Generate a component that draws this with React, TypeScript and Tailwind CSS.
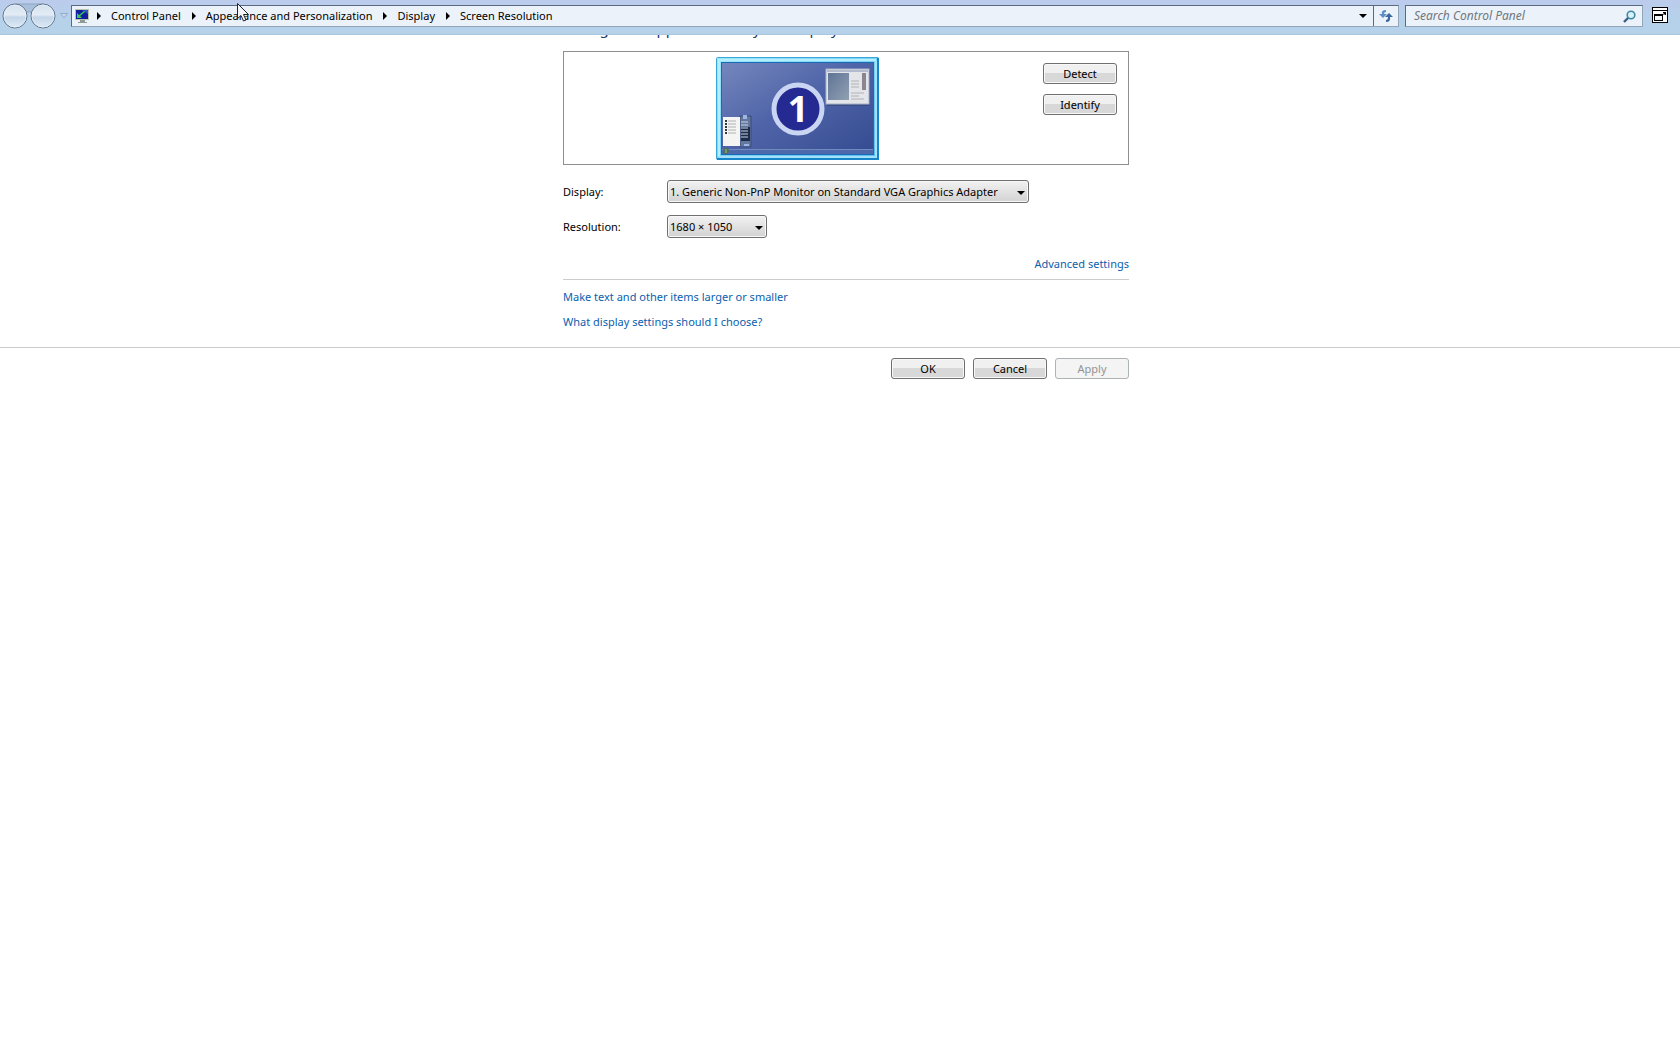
import { ReactNode, useState } from "react";
import clsx from "clsx";

const crumbs = [
  "Control Panel",
  "Appearance and Personalization",
  "Display",
  "Screen Resolution",
];

const displays = ["1. Generic Non-PnP Monitor on Standard VGA Graphics Adapter"];
const resolutions = ["1680 × 1050", "1440 × 900", "1280 × 1024", "1024 × 768"];

function NavOrbs() {
  return (
    <svg width="56" height="28" viewBox="0 0 56 28" aria-hidden="true">
      <defs>
        <linearGradient id="orb" x1="0" y1="0" x2="0" y2="1">
          <stop offset="0" stopColor="#d3e0ef" />
          <stop offset="0.45" stopColor="#e3ecf5" />
          <stop offset="0.55" stopColor="#c3d5e7" />
          <stop offset="1" stopColor="#dcebf8" />
        </linearGradient>
      </defs>
      <path d="M15 2h28v5q-14 6-28 0z" fill="#a9c0dc" stroke="#8fa6c2" />
      <circle cx="15" cy="14" r="12" fill="url(#orb)" stroke="#5f7488" />
      <circle cx="15" cy="14" r="11" fill="none" stroke="#eef4fa" strokeOpacity="0.6" />
      <circle cx="43" cy="14" r="12" fill="url(#orb)" stroke="#5f7488" />
      <circle cx="43" cy="14" r="11" fill="none" stroke="#eef4fa" strokeOpacity="0.6" />
    </svg>
  );
}

function DisplayIcon() {
  return (
    <svg width="16" height="16" viewBox="0 0 16 16" aria-hidden="true">
      <path d="M1 1h14v11H1z" fill="#b9c3ae" />
      <path d="M2 2h12v9H2z" fill="#10209a" />
      <path d="M8 2h6v4z" fill="#2d57c4" />
      <path d="M3 5v5h5l-2-2 5-4-1-1-5 4z" fill="#35c95a" />
      <path d="M6 12h5v2h2v1H4v-1h2z" fill="#8e9a94" />
    </svg>
  );
}

function CrumbArrow() {
  return (
    <svg width="4" height="8" viewBox="0 0 4 8" aria-hidden="true">
      <path d="M0 0l4 4-4 4z" fill="#000" />
    </svg>
  );
}

function DownArrow({ className }: { className?: string }) {
  return (
    <svg
      width="8"
      height="4"
      viewBox="0 0 8 4"
      className={className}
      aria-hidden="true"
    >
      <path d="M0 0h8L4 4z" fill="#000" />
    </svg>
  );
}

function RefreshIcon() {
  return (
    <svg width="14" height="14" viewBox="0 0 14 14" aria-hidden="true">
      <path d="M7 1Q2 1 3 5H0l4 4 4-4H5q0-2 2-2z" fill="#5d8fc6" />
      <path d="M7 13q5 0 4-5h3l-4-4-4 4h3q0 3-2 3z" fill="#3d689f" />
    </svg>
  );
}

function SearchIcon() {
  return (
    <svg width="13" height="13" viewBox="0 0 13 13" aria-hidden="true">
      <path d="M1 12l5-5" stroke="#3a5f86" strokeWidth="2.4" />
      <circle cx="8" cy="5" r="3.8" fill="#d9f0f6" stroke="#3f87a6" strokeWidth="1.6" />
    </svg>
  );
}

function RestoreIcon() {
  return (
    <svg width="16" height="16" viewBox="0 0 16 16" aria-hidden="true">
      <path d="M0 0h16v16H0z" fill="#000" />
      <path d="M1 1h14v2H1zM1 4h14v11H1z" fill="#fff" />
      <path d="M2 7h9v7H2z" fill="#000" />
      <path d="M3 9h7v4H3z" fill="#f2f7fc" />
      <path d="M11 5h3v3h-1V7l-1 1-1-1 1-1h-1z" fill="#000" />
    </svg>
  );
}

function Cursor() {
  return (
    <svg
      width="14"
      height="20"
      viewBox="0 0 14 20"
      className="pointer-events-none absolute top-[3px] left-[237px]"
      aria-hidden="true"
    >
      <path
        d="M.5.5v15l3.500-3 2.500 5.500 2.500-1-2.500-5.500h5z"
        fill="#f4f7fa"
        stroke="#222"
      />
    </svg>
  );
}

function MonitorPreview() {
  return (
    <svg
      width="163"
      height="103"
      viewBox="0 0 163 103"
      role="img"
      aria-label="Monitor 1"
    >
      <defs>
        <linearGradient id="desk" x1="0" y1="0" x2="1" y2="1">
          <stop offset="0" stopColor="#7587bd" />
          <stop offset="0.45" stopColor="#5065a9" />
          <stop offset="1" stopColor="#354b91" />
        </linearGradient>
        <linearGradient id="frame" x1="0" y1="0" x2="1" y2="1">
          <stop offset="0" stopColor="#9ae8fb" />
          <stop offset="1" stopColor="#57bdf0" />
        </linearGradient>
        <linearGradient id="pane" x1="0" y1="0" x2="1" y2="1">
          <stop offset="0" stopColor="#5f7596" />
          <stop offset="1" stopColor="#91a0b2" />
        </linearGradient>
      </defs>
      <rect x="0.5" y="0.5" width="162" height="102" rx="1" fill="url(#frame)" stroke="#3ba6d8" />
      <path d="M162 1v101H1" fill="none" stroke="#1485c8" strokeWidth="2" />
      <path d="M3 100V3h157" fill="none" stroke="#b5effd" strokeWidth="2" />
      <path d="M3 100h157V4" fill="none" stroke="#a5e0fa" strokeWidth="2" />
      <rect x="5.500" y="5.500" width="152" height="92" fill="url(#desk)" stroke="#186bb4" />
      <path d="M6 92h151v5H6z" fill="#6f8bc0" />
      <path d="M6 93h151v4H6z" fill="#4d69ab" />
      <circle cx="10" cy="94" r="3" fill="#47706a" />
      <path d="M10 92v4" stroke="#b7bd4c" />

      <rect x="111" y="14" width="43" height="35" fill="#3c4e88" />
      <rect x="110" y="12" width="43" height="35" fill="#e3e5e8" stroke="#a9b3c6" />
      <path d="M111 13h41v2h-41z" fill="#b2bacd" />
      <rect x="112" y="16" width="21" height="27" fill="url(#pane)" />
      <path d="M135 24h8M135 27h8M135 30h8M135 36h13M135 39h8M135 42h13" stroke="#b0b2b6" />
      <rect x="146" y="16" width="4" height="17" fill="#8c8491" />

      <path d="M24 59h11v31H24z" fill="#64789f" stroke="#384a78" />
      <path d="M25 70h9v14h-9z" fill="#1e2c4c" />
      <path d="M25 65h7M25 68h7M25 71h7M25 74h7M25 77h7M25 80h7" stroke="#c9d3e4" />
      <path d="M27 58h4v4h-4zM28 87h5v2h-5z" fill="#9db6e5" />
      <path d="M7 60h17v29H7z" fill="#f4f4f3" />
      <path d="M9 64h2M9 67h2M9 70h2M9 73h2M9 76h2" stroke="#34383d" strokeWidth="2" />
      <path d="M12 64h8M12 67h8M12 70h8M12 73h8M12 76h8" stroke="#aeb2b4" />

      <circle cx="82" cy="52" r="24" fill="#242a91" stroke="#c9d5f2" strokeWidth="5" />
      <text
        x="82"
        y="65"
        textAnchor="middle"
        fill="#fff"
        className="font-['Open_Sans',sans-serif] text-[36px] font-bold"
      >
        1
      </text>
    </svg>
  );
}

function DialogButton({
  children,
  disabled,
}: {
  children: ReactNode;
  disabled?: boolean;
}) {
  return (
    <button
      type="button"
      disabled={disabled}
      className={clsx(
        "flex h-[21px] w-[74px] items-center justify-center rounded-[3px] border",
        disabled
          ? "border-[#adb2b5] bg-[#f4f4f4] text-[#939393]"
          : "border-[#707070] bg-linear-to-b from-[#f0f0f0] from-50% to-[#d8d8d8] to-50% inset-ring inset-ring-[#f8f8f8]"
      )}
    >
      {children}
    </button>
  );
}

function SelectRow({
  id,
  label,
  options,
  width,
}: {
  id: string;
  label: string;
  options: string[];
  width: string;
}) {
  const [value, setValue] = useState(options[0]);

  return (
    <div className="flex items-center">
      <label htmlFor={id} className="w-[104px] shrink-0">
        {label}
      </label>
      <div className={clsx("relative", width)}>
        <select
          id={id}
          value={value}
          onChange={(e) => setValue(e.target.value)}
          className="block h-[23px] w-full appearance-none rounded-[3px] border border-[#707070] bg-linear-to-b from-[#f2f2f2] to-[#d2d2d2] pl-[2px] inset-ring inset-ring-[#f8f8f8]"
        >
          {options.map((option) => (
            <option key={option}>{option}</option>
          ))}
        </select>
        <DownArrow className="pointer-events-none absolute top-[11px] right-1" />
      </div>
    </div>
  );
}

function AddressBar() {
  return (
    <header className="relative flex h-[35px] items-start border-b border-[#a9c6df] bg-linear-to-b from-[#bccbec] to-[#b5d2ea] to-60% pt-[5px] pr-3">
      <div className="-mt-[3px] flex h-7 items-center">
        <NavOrbs />
        <svg width="8" height="6" viewBox="0 0 8 6" className="ml-1" aria-hidden="true">
          <path d="M.5.5h7L4 5z" fill="#c9daf0" stroke="#93a9c8" />
        </svg>
      </div>

      <div className="ml-[3px] flex h-[22px] min-w-0 flex-1 border border-t-[#5a6a80] border-r-[#92a5bb] border-b-[#92a5bb] border-l-[#5a6a80] bg-[#ebf2f9]">
        <nav className="flex flex-1 items-center pl-[2px]" aria-label="Breadcrumb">
          <DisplayIcon />
          <ol className="ml-[7px] flex items-center gap-[11px]">
            {crumbs.map((crumb) => (
              <li key={crumb} className="flex items-center gap-[10px]">
                <CrumbArrow />
                <a href="#">{crumb}</a>
              </li>
            ))}
          </ol>
        </nav>
        <button type="button" aria-label="Previous locations" className="px-[6px]">
          <DownArrow />
        </button>
        <button
          type="button"
          aria-label="Refresh"
          className="flex w-[25px] items-center justify-center border-l border-[#5a6a80]"
        >
          <RefreshIcon />
        </button>
      </div>

      <div className="ml-[6px] flex h-[22px] w-[238px] items-center border border-t-[#5a6a80] border-r-[#92a5bb] border-b-[#92a5bb] border-l-[#5a6a80] bg-[#ebf2f9] pr-[6px] pl-2">
        <input
          type="text"
          aria-label="Search Control Panel"
          placeholder="Search Control Panel"
          className="min-w-0 flex-1 text-[12px] italic outline-none placeholder:text-[#6f7780]"
        />
        <SearchIcon />
      </div>

      <button type="button" aria-label="Restore window" className="mt-[2px] ml-[9px]">
        <RestoreIcon />
      </button>
      <Cursor />
    </header>
  );
}

export default function App() {
  return (
    <div className="min-h-screen bg-white font-['Noto_Sans',sans-serif] text-[11px] leading-4 text-black">
      <AddressBar />

      <main>
        <div className="mx-auto max-w-[578px] pl-3">
          {/* heading is scrolled up under the address bar */}
          <div className="flex h-2 items-end overflow-hidden">
            <h1 className="text-[15px] leading-[30px] text-[#1b3a5e]">
              Change the appearance of your displays
            </h1>
          </div>

          <section className="mt-2 flex h-[114px] items-start justify-between border border-[#8e8f8f] pr-[11px]">
            <div className="flex flex-1 justify-center pt-[5px] pr-[13px]">
              <MonitorPreview />
            </div>
            <div className="flex flex-col gap-[10px] pt-[11px]">
              <DialogButton>Detect</DialogButton>
              <DialogButton>Identify</DialogButton>
            </div>
          </section>

          <div className="mt-[15px] flex flex-col gap-3">
            <SelectRow id="display" label="Display:" options={displays} width="w-[362px]" />
            <SelectRow
              id="resolution"
              label="Resolution:"
              options={resolutions}
              width="w-[100px]"
            />
          </div>

          <div className="mt-[18px] flex justify-end border-b border-[#ccc] pb-[7px] text-[#0a60ad]">
            <a href="#">Advanced settings</a>
          </div>

          <div className="flex flex-col items-start gap-[9px] py-[9px] text-[#0a60ad]">
            <a href="#">Make text and other items larger or smaller</a>
            <a href="#">What display settings should I choose?</a>
          </div>
        </div>
      </main>

      <footer className="mt-2 border-t border-[#ccc] pt-[10px]">
        <div className="mx-auto flex max-w-[578px] justify-end gap-2">
          <DialogButton>OK</DialogButton>
          <DialogButton>Cancel</DialogButton>
          <DialogButton disabled>Apply</DialogButton>
        </div>
      </footer>
    </div>
  );
}
